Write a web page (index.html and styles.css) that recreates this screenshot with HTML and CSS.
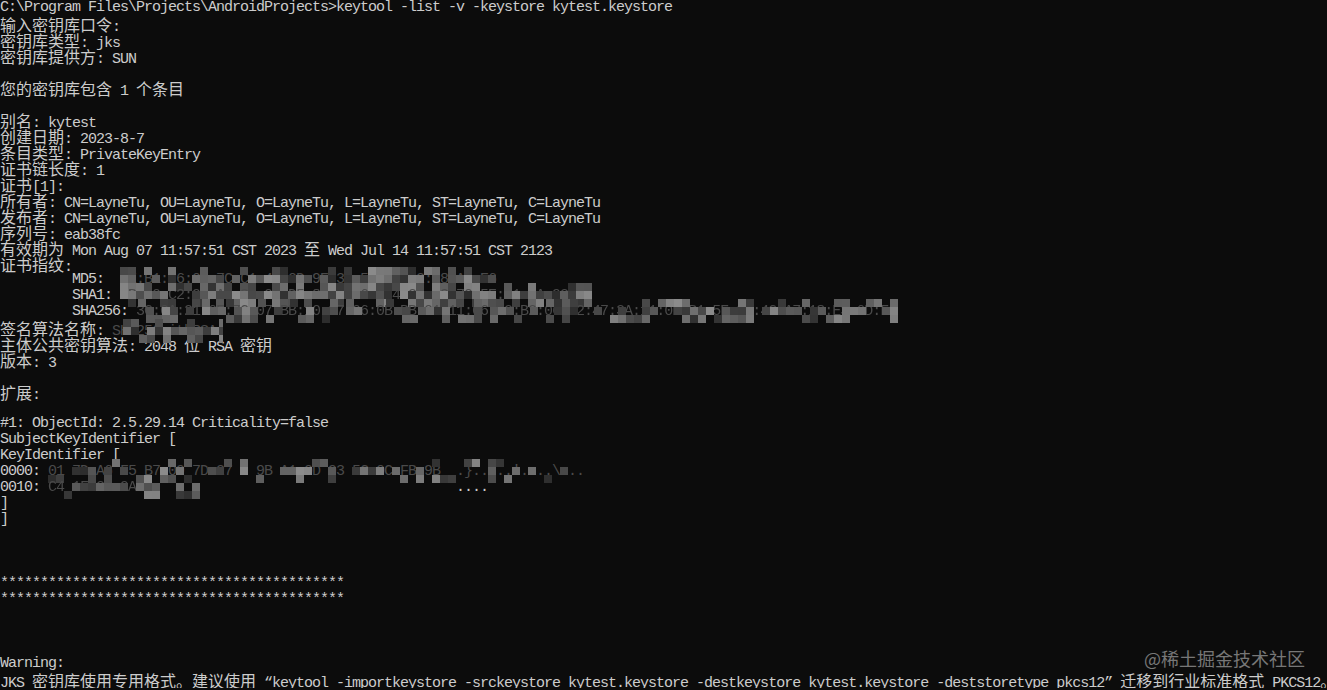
FILE: index.html
```html
<!DOCTYPE html>
<html lang="zh-CN">
<head>
    <meta charset="UTF-8">
    <title>keytool</title>
    <link rel="stylesheet" href="styles.css">
</head>
<body>
    <div class="term">
        <div class="ln">C:\Program Files\Projects\AndroidProjects&gt;keytool -list -v -keystore kytest.keystore</div>
        <div class="ln"><span class="zh">输入密钥库口令</span>:</div>
        <div class="ln"><span class="zh">密钥库类型</span>: jks</div>
        <div class="ln"><span class="zh">密钥库提供方</span>: SUN</div>
        <div class="ln"></div>
        <div class="ln"><span class="zh">您的密钥库包含</span> 1 <span class="zh">个条目</span></div>
        <div class="ln"></div>
        <div class="ln"><span class="zh">别名</span>: kytest</div>
        <div class="ln"><span class="zh">创建日期</span>: 2023-8-7</div>
        <div class="ln"><span class="zh">条目类型</span>: PrivateKeyEntry</div>
        <div class="ln"><span class="zh">证书链长度</span>: 1</div>
        <div class="ln"><span class="zh">证书</span>[1]:</div>
        <div class="ln"><span class="zh">所有者</span>: CN=LayneTu, OU=LayneTu, O=LayneTu, L=LayneTu, ST=LayneTu, C=LayneTu</div>
        <div class="ln"><span class="zh">发布者</span>: CN=LayneTu, OU=LayneTu, O=LayneTu, L=LayneTu, ST=LayneTu, C=LayneTu</div>
        <div class="ln"><span class="zh">序列号</span>: eab38fc</div>
        <div class="ln"><span class="zh">有效期为</span> Mon Aug 07 11:57:51 CST 2023 <span class="zh">至</span> Wed Jul 14 11:57:51 CST 2123</div>
        <div class="ln"><span class="zh">证书指纹</span>:</div>
        <div class="ln">         MD5:  <span class="mask" data-w="376" data-d="0.75">7E:B1:26:01:7C:C1:4A:0D:9E:31:5B:77:C2:18:A0:E6</span></div>
        <div class="ln">         SHA1: <span class="mask" data-w="472" data-d="0.85">4B:60:C2:91:AF:37:0E:D5:88:1C:6A:F4:29:B3:70:5E:D1:0A:93:C7</span></div>
        <div class="ln">         SHA256: <span class="mask" data-w="760" data-d="0.55" data-x="2">3C:0A:21:6F:7C:07:BB:10:97:06:0B:BB:01:11:06:82:B2:06:82:47:3A:11:0B:B1:5E:92:4C:A7:18:E3:6D:F0</span></div>
        <div class="ln"><span class="zh">签名算法名称</span>: <span class="mask" data-w="100" data-d="0.8" data-x="11">SHA256withRSA</span></div>
        <div class="ln"><span class="zh">主体公共密钥算法</span>: 2048 <span class="zh">位</span> RSA <span class="zh">密钥</span></div>
        <div class="ln"><span class="zh">版本</span>: 3</div>
        <div class="ln"></div>
        <div class="ln"><span class="zh">扩展</span>:</div>
        <div class="ln"></div>
        <div class="ln">#1: ObjectId: 2.5.29.14 Criticality=false</div>
        <div class="ln">SubjectKeyIdentifier [</div>
        <div class="ln">KeyIdentifier [</div>
        <div class="ln">0000: <span class="mask" data-w="536" data-d="0.45">01 7D A6 F5 B7 09 7D 27   9B A1 0D 93 5C 0C FB 9B  .}.....'....\...</span></div>
        <div class="ln">0010: <span class="mask" data-w="160" data-d="0.55">C4 1F 2B 9A                                        </span>....</div>
        <div class="ln">]</div>
        <div class="ln">]</div>
        <div class="ln"></div>
        <div class="ln"></div>
        <div class="ln"></div>
        <div class="ln">*******************************************</div>
        <div class="ln">*******************************************</div>
        <div class="ln"></div>
        <div class="ln"></div>
        <div class="ln"></div>
        <div class="ln">Warning:</div>
        <div class="ln">JKS <span class="zh">密钥库使用专用格式。建议使用</span> “keytool -importkeystore -srckeystore kytest.keystore -destkeystore kytest.keystore -deststoretype pkcs12” <span class="zh">迁移到行业标准格式</span> PKCS12<span class="zh">。</span></div>
    </div>
    <div class="watermark">@稀土掘金技术社区</div>

    <script>
        // pixelated blur over the fingerprints
        function seeded(seed) {
            let s = seed;
            return () => {
                s = (s * 16807) % 2147483647;
                return s / 2147483647;
            };
        }

        document.querySelectorAll('.mask').forEach((el, i) => {
            const w = +el.dataset.w;
            const d = +el.dataset.d;
            const rowDensity = [d * 0.55, d, d * 0.6];
            const rnd = seeded(i * 7919 + 101);
            const canvas = document.createElement('canvas');
            canvas.width = w;
            canvas.height = 24;
            canvas.style.left = (+el.dataset.x || 0) + 'px';
            const ctx = canvas.getContext('2d');
            for (let row = 0; row < 3; row++) {
                for (let x = 0; x < w; x += 8) {
                    if (rnd() > rowDensity[row]) continue;
                    const g = Math.floor(45 + rnd() * 95);
                    ctx.fillStyle = `rgb(${g},${g},${g})`;
                    ctx.fillRect(x, row * 8, 8, 8);
                }
            }
            el.appendChild(canvas);
        });
    </script>
</body>
</html>
```

FILE: styles.css
```css
html, body {
    margin: 0;
    background: #0c0c0c;
    overflow: hidden;
}
.term {
    font-family: "Liberation Mono", monospace;
    font-size: 15px;
    letter-spacing: -1px;
    color: #cccccc;
}
.ln {
    height: 16px;
    line-height: 16px;
    white-space: pre;
}
.zh {
    font-family: "Noto Sans CJK SC", sans-serif;
    font-size: 16px;
    letter-spacing: 0;
    line-height: 16px;
}
.mask {
    position: relative;
    color: #4a4a4a;
}
.mask canvas {
    position: absolute;
    top: -4px;
}
.watermark {
    position: absolute;
    right: 22px;
    top: 645px;
    font-family: "Noto Sans CJK SC", sans-serif;
    font-size: 18px;
    color: #777777;
}
```
